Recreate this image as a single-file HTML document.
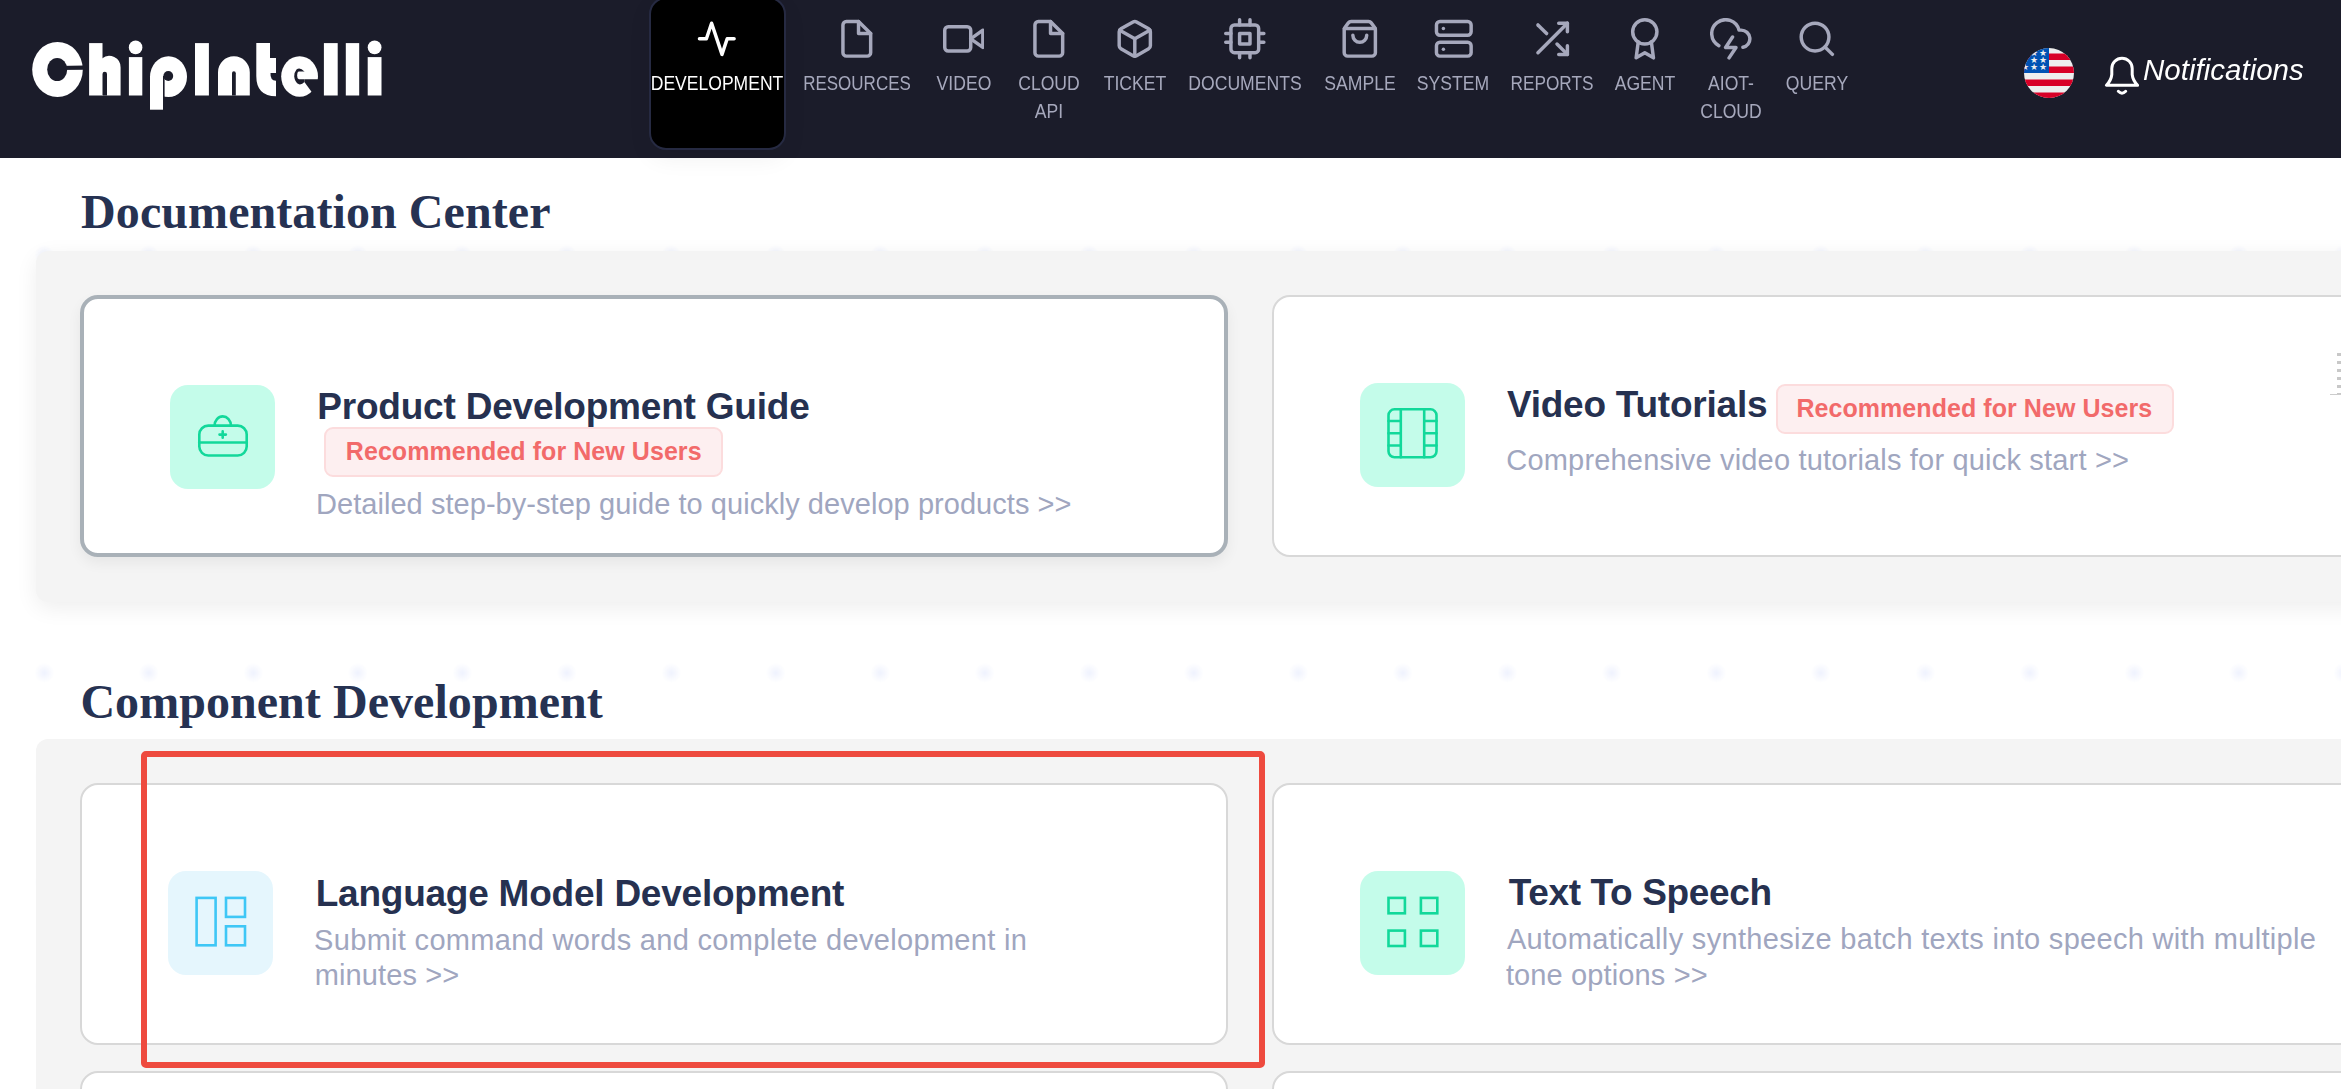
<!DOCTYPE html>
<html><head><meta charset="utf-8">
<style>
*{box-sizing:border-box;margin:0;padding:0}
html,body{width:2341px;height:1089px;overflow:hidden;background:#fff;font-family:"Liberation Sans",sans-serif}
.abs{position:absolute}
#hdr{position:absolute;left:0;top:0;width:2341px;height:157.5px;background:#1b1c2a}
.active{position:absolute;left:649.2px;top:-3px;width:136.4px;height:153px;background:#000;border:2px solid #262a42;border-radius:17px;box-shadow:0 8px 24px rgba(0,0,0,0.06)}
.ni{position:absolute;top:18px;width:41.6px;height:41.6px}
.ni svg{width:41.6px;height:41.6px;display:block;fill:none;stroke:#a6a8bc;stroke-width:2;stroke-linecap:round;stroke-linejoin:round}
.nl{position:absolute;top:68.5px;font-size:20px;line-height:28.7px;color:#a6a8bc;white-space:nowrap;text-align:center;transform-origin:50% 0}
.hd{position:absolute;left:81px;font-family:"Liberation Serif",serif;font-weight:bold;font-size:48px;line-height:48px;color:#263252;white-space:nowrap}
.panel{position:absolute;left:36px;width:2400px;background:#f4f4f4;border-radius:12px}
.card{position:absolute;width:1148px;height:262px;background:#fff;border:2px solid #d8d8d8;border-radius:18px}
.ib{position:absolute;width:105px;height:104px;border-radius:18px;background:#c4fcea}
.ib svg{position:absolute;fill:none;stroke-linecap:round;stroke-linejoin:round}
.tt{position:absolute;font-weight:bold;font-size:37px;line-height:37px;color:#263150;white-space:nowrap}
.ds{position:absolute;font-size:29px;line-height:29px;color:#a0a6bf;white-space:nowrap}
.bdg{position:absolute;height:49.5px;background:#fdeff0;border:2px solid #fcdcdd;border-radius:9px}
.bt{position:absolute;font-weight:bold;font-size:25px;line-height:25px;color:#f26a6a;white-space:nowrap}
</style></head><body>
<!-- dotted background -->
<div class="abs" style="left:0;top:157px;width:2341px;height:932px;background-image:radial-gradient(circle at 52.25px 52.25px, rgba(95,125,240,0.10) 0, rgba(95,125,240,0.06) 4px, rgba(95,125,240,0) 10px);background-size:104.5px 104.5px;background-position:-7.95px 45.65px"></div>

<div id="hdr">
  <svg class="abs" style="left:0;top:0" width="400" height="157" viewBox="0 0 400 157">
    <defs>
      <mask id="lm" maskUnits="userSpaceOnUse" x="0" y="0" width="400" height="157">
        <rect x="0" y="0" width="400" height="157" fill="#000"/>
        <g fill="#fff">
          <ellipse cx="57.5" cy="69.5" rx="25.3" ry="27.6"/>
          <rect x="89.1" y="43.1" width="13.4" height="52.4"/>
          <path d="M102 95.5 V58.4 A11.4 11.4 0 0 1 120.6 67.5 V95.5 Z"/>
          <circle cx="135.6" cy="47.4" r="6.8"/>
          <rect x="128.9" y="57.1" width="13.4" height="38.4"/>
          <ellipse cx="168.5" cy="76.7" rx="18.5" ry="20.4"/>
          <rect x="150" y="76" width="13" height="33.7"/>
          <rect x="195" y="43.1" width="13.9" height="52.4"/>
          <path d="M218 95.5 V72.2 A15.9 15.9 0 0 1 249.8 72.2 V95.5 Z"/>
          <path d="M256.3 43.1 H270 V58.1 H276 V73.1 H270.5 Q270 80.7 276 80.7 V96.3 Q256.3 96.3 256.3 76 Z"/>
          <ellipse cx="299.6" cy="76.5" rx="18.4" ry="20.2"/>
          <rect x="323.9" y="43.1" width="13.8" height="52.4"/>
          <rect x="345.8" y="43.1" width="13.4" height="52.4"/>
          <circle cx="374.6" cy="47.4" r="6.9"/>
          <rect x="367.7" y="57.1" width="13.8" height="38.4"/>
        </g>
        <g fill="#000">
          <ellipse cx="57.2" cy="69.5" rx="10" ry="11.5"/>
          <path d="M57 66.1 L85 65.6 L85 69.8 L57 69.9 Z"/>
          <path d="M102.5 95.5 V74 A2.25 2.25 0 0 1 107 74 V95.5 Z"/>
          <circle cx="168.3" cy="76" r="4.9"/>
          <rect x="163" y="76" width="1.6" height="21"/>
          <path d="M232 95.5 V73.2 A1.9 1.9 0 0 1 235.8 73.2 V95.5 Z"/>
          <path d="M304.4 71.5 Q300 66.8 296.5 69.5 Q293.8 73 294.2 76.5 Q294.8 82.5 299 84.3 Q302 84.8 304.4 82.1 Z"/>
        </g>
        <path fill="#fff" d="M299 71.5 H310 V79.2 H299 Q297.2 79.2 297.2 75.35 Q297.2 71.5 299 71.5 Z"/>
        <path fill="#000" d="M304.4 79.2 L319.6 79.2 L319.6 102 L319 102 L304.4 82.1 Z"/>
      </mask>
    </defs>
    <rect x="0" y="0" width="400" height="157" fill="#fff" mask="url(#lm)"/>
  </svg>

  <div class="active"></div>

  <!-- nav icons -->
  <div class="ni" style="left:696.1px"><svg viewBox="0 0 24 24" style="stroke:#fff"><polyline points="22 12 18 12 15 21 9 3 6 12 2 12"/></svg></div>
  <div class="ni" style="left:836.1px"><svg viewBox="0 0 24 24"><path d="M13 2H6a2 2 0 0 0-2 2v16a2 2 0 0 0 2 2h12a2 2 0 0 0 2-2V9z"/><polyline points="13 2 13 9 20 9"/></svg></div>
  <div class="ni" style="left:942.7px"><svg viewBox="0 0 24 24"><polygon points="23 7 16 12 23 17 23 7"/><rect x="1" y="5" width="15" height="14" rx="2" ry="2"/></svg></div>
  <div class="ni" style="left:1028.4px"><svg viewBox="0 0 24 24"><path d="M13 2H6a2 2 0 0 0-2 2v16a2 2 0 0 0 2 2h12a2 2 0 0 0 2-2V9z"/><polyline points="13 2 13 9 20 9"/></svg></div>
  <div class="ni" style="left:1114.2px"><svg viewBox="0 0 24 24"><path d="M21 16V8a2 2 0 0 0-1-1.73l-7-4a2 2 0 0 0-2 0l-7 4A2 2 0 0 0 3 8v8a2 2 0 0 0 1 1.73l7 4a2 2 0 0 0 2 0l7-4A2 2 0 0 0 21 16z"/><path d="m3.3 7 8.7 5 8.7-5"/><path d="M12 22V12"/></svg></div>
  <div class="ni" style="left:1224.2px"><svg viewBox="0 0 24 24"><rect x="4" y="4" width="16" height="16" rx="2"/><rect x="9" y="9" width="6" height="6"/><path d="M9 1v3M15 1v3M9 20v3M15 20v3M20 9h3M20 14h3M1 9h3M1 14h3"/></svg></div>
  <div class="ni" style="left:1338.9px"><svg viewBox="0 0 24 24"><path d="M3.4 5.467a2 2 0 0 0-.4 1.2V20a2 2 0 0 0 2 2h14a2 2 0 0 0 2-2V6.667a2 2 0 0 0-.4-1.2l-2-2.667A2 2 0 0 0 17 2H7a2 2 0 0 0-1.6.8z"/><path d="M3.103 6.034h17.794"/><path d="M16 10a4 4 0 0 1-8 0"/></svg></div>
  <div class="ni" style="left:1432.5px"><svg viewBox="0 0 24 24"><rect x="2" y="2" width="20" height="8" rx="2" ry="2"/><rect x="2" y="14" width="20" height="8" rx="2" ry="2"/><line x1="6" y1="6" x2="6.01" y2="6"/><line x1="6" y1="18" x2="6.01" y2="18"/></svg></div>
  <div class="ni" style="left:1530.7px"><svg viewBox="0 0 24 24"><polyline points="16 3 21 3 21 8"/><line x1="4" y1="20" x2="21" y2="3"/><polyline points="21 16 21 21 16 21"/><line x1="15" y1="15" x2="21" y2="21"/><line x1="4" y1="4" x2="9" y2="9"/></svg></div>
  <div class="ni" style="left:1623.6px"><svg viewBox="0 0 24 24"><circle cx="12" cy="8" r="7"/><polyline points="8.21 13.89 7 23 12 20 17 23 15.79 13.88"/></svg></div>
  <div class="ni" style="left:1710.2px"><svg viewBox="0 0 24 24"><path d="M19 16.9A5 5 0 0 0 18 7h-1.26a8 8 0 1 0-11.62 9"/><polyline points="13 11 9 17 15 17 11 23"/></svg></div>
  <div class="ni" style="left:1796px"><svg viewBox="0 0 24 24"><circle cx="11" cy="11" r="8"/><path d="m21 21-4.3-4.3"/></svg></div>

  <!-- nav labels (centered at x) -->
  <div class="nl" style="left:616.6px;width:200px;color:#fff;transform:scaleX(0.877)">DEVELOPMENT</div>
  <div class="nl" style="left:757.2px;width:200px;transform:scaleX(0.85)">RESOURCES</div>
  <div class="nl" style="left:863.5px;width:200px;transform:scaleX(0.88)">VIDEO</div>
  <div class="nl" style="left:949.2px;width:200px;transform:scaleX(0.88)">CLOUD<br>API</div>
  <div class="nl" style="left:1035px;width:200px;transform:scaleX(0.88)">TICKET</div>
  <div class="nl" style="left:1145px;width:200px;transform:scaleX(0.88)">DOCUMENTS</div>
  <div class="nl" style="left:1259.7px;width:200px;transform:scaleX(0.88)">SAMPLE</div>
  <div class="nl" style="left:1353.3px;width:200px;transform:scaleX(0.88)">SYSTEM</div>
  <div class="nl" style="left:1451.5px;width:200px;transform:scaleX(0.86)">REPORTS</div>
  <div class="nl" style="left:1545.3px;width:200px;transform:scaleX(0.88)">AGENT</div>
  <div class="nl" style="left:1631px;width:200px;transform:scaleX(0.88)">AIOT-<br>CLOUD</div>
  <div class="nl" style="left:1716.8px;width:200px;transform:scaleX(0.88)">QUERY</div>

  <!-- flag -->
  <svg class="abs" style="left:2024px;top:47.5px" width="50" height="50" viewBox="0 0 50 50">
    <defs><clipPath id="fc"><circle cx="25" cy="25" r="25"/></clipPath></defs>
    <g clip-path="url(#fc)">
      <rect width="50" height="50" fill="#eeeeee"/>
      <rect y="5.5" width="50" height="6.5" fill="#d80027"/>
      <rect y="18.5" width="50" height="6.5" fill="#d80027"/>
      <rect y="31.5" width="50" height="6.5" fill="#d80027"/>
      <rect y="44.5" width="50" height="6.5" fill="#d80027"/>
      <rect x="0" y="0" width="25" height="25" fill="#0052b4"/>
      <g fill="#eee" font-size="8.5" font-family="Liberation Sans"><text x="15.1" y="7.7">★</text><text x="6.1" y="7.7">★</text><text x="6.1" y="15">★</text><text x="15.1" y="15">★</text><text x="-2.9" y="22.2">★</text><text x="6.1" y="22.2">★</text><text x="15.1" y="22.2">★</text></g>
    </g>
  </svg>
  <!-- bell -->
  <svg class="abs" style="left:2102px;top:55px" width="40" height="42" viewBox="0 0 40 42">
    <path d="M4.4 30.2 H35.6 Q30.8 25.5 30.2 19.5 V13.5 A10.2 10.2 0 0 0 9.8 13.5 V19.5 Q9.2 25.5 4.4 30.2 Z" fill="none" stroke="#fff" stroke-width="3" stroke-linejoin="round"/>
    <path d="M16.3 36.3 Q20 40 23.7 36.3" fill="none" stroke="#fff" stroke-width="3" stroke-linecap="round"/>
  </svg>
  <div class="abs" style="left:2143px;top:56.4px;font-style:italic;font-size:29px;line-height:29px;color:#fff;white-space:nowrap;transform:scaleX(1.018);transform-origin:0 0">Notifications</div>
</div>

<!-- Section 1 -->
<div id="t_doc" class="hd" style="top:187.90px;left:81.10px;letter-spacing:0.079px">Documentation Center</div>
<div class="panel" style="top:250.7px;height:351.5px;box-shadow:0 6px 22px rgba(0,0,0,0.07)"></div>

<div class="card" style="left:80px;top:295px;border:4px solid #a9b1b8;box-shadow:0 6px 14px rgba(0,0,0,0.06)"></div>
<div class="ib" style="left:170px;top:385px"></div>
<svg class="abs" style="left:170px;top:385px" width="105" height="104" viewBox="0 0 105 104">
  <g fill="none" stroke="#12d89a" stroke-width="2.6" stroke-linecap="round" stroke-linejoin="round">
    <rect x="29.3" y="40.6" width="47.4" height="29.9" rx="9"/>
    <path d="M29.3 57.5 H76.7"/>
    <path d="M44.6 40.6 A8.1 9.2 0 0 1 60.9 40.6"/>
    <path d="M52.7 46.4 V52.8 M49.5 49.6 H55.9"/>
  </g>
</svg>
<div id="t_pdg" class="tt" style="left:317.30px;top:388.00px;letter-spacing:-0.212px">Product Development Guide</div>
<div class="bdg" style="left:324.3px;top:427.3px;width:398.6px"></div>
<div id="b1" class="bt" style="left:345.80px;top:438.60px;letter-spacing:0.062px">Recommended for New Users</div>
<div id="d1" class="ds" style="left:316.00px;top:490.00px;letter-spacing:0.047px">Detailed step-by-step guide to quickly develop products &gt;&gt;</div>

<div class="card" style="left:1272px;top:295px"></div>
<div class="ib" style="left:1360px;top:383px"></div>
<svg class="abs" style="left:1360px;top:383px" width="105" height="104" viewBox="0 0 105 104">
  <g fill="none" stroke="#12d89a" stroke-width="2.6" stroke-linecap="round" stroke-linejoin="round">
    <rect x="28.5" y="26.3" width="48" height="48" rx="6"/>
    <path d="M40.8 26.3 V74.3 M64.2 26.3 V74.3 M28.5 38 H40.8 M28.5 50.3 H40.8 M28.5 62.5 H40.8 M64.2 38 H76.5 M64.2 50.3 H76.5 M64.2 62.5 H76.5"/>
  </g>
</svg>
<div id="t_vt" class="tt" style="left:1506.90px;top:386.4px;letter-spacing:-0.229px">Video Tutorials</div>
<div class="bdg" style="left:1776.2px;top:384px;width:397.7px"></div>
<div id="b2" class="bt" style="left:1796.40px;top:396.10px;letter-spacing:0.062px">Recommended for New Users</div>
<div id="d2" class="ds" style="left:1506.30px;top:446.30px;letter-spacing:0.181px">Comprehensive video tutorials for quick start &gt;&gt;</div>

<!-- Section 2 -->
<div id="t_comp" class="hd" style="top:678px;left:80.40px;letter-spacing:0.055px">Component Development</div>
<div class="panel" style="top:738.7px;height:400px"></div>

<div class="card" style="left:80px;top:783px"></div>
<div class="ib" style="left:168.3px;top:870.8px;background:#e5f6fd"></div>
<svg class="abs" style="left:168.3px;top:870.8px" width="105" height="104" viewBox="0 0 105 104">
  <g fill="none" stroke="#3ec7f6" stroke-width="2.6" stroke-linejoin="miter">
    <rect x="28.6" y="26.9" width="19" height="47.4"/>
    <rect x="58" y="26.9" width="19" height="19"/>
    <rect x="58" y="55.3" width="19" height="19"/>
  </g>
</svg>
<div id="t_lmd" class="tt" style="left:315.70px;top:874.60px;letter-spacing:-0.232px">Language Model Development</div>
<div id="d3a" class="ds" style="left:314.10px;top:925.80px;letter-spacing:0.315px">Submit command words and complete development in</div>
<div id="d3b" class="ds" style="left:314.70px;top:961.40px;letter-spacing:0.122px">minutes &gt;&gt;</div>

<div class="card" style="left:1272px;top:783px"></div>
<div class="ib" style="left:1360px;top:870.8px"></div>
<svg class="abs" style="left:1360px;top:870.8px" width="105" height="104" viewBox="0 0 105 104">
  <g fill="none" stroke="#12d89a" stroke-width="2.6" stroke-linejoin="miter">
    <rect x="28.5" y="26.9" width="16.4" height="15.4"/>
    <rect x="60.9" y="26.9" width="16.4" height="15.4"/>
    <rect x="28.5" y="59.6" width="16.4" height="15.4"/>
    <rect x="60.9" y="59.6" width="16.4" height="15.4"/>
  </g>
</svg>
<div id="t_tts" class="tt" style="left:1508.70px;top:874.4px;letter-spacing:-0.354px">Text To Speech</div>
<div id="d4a" class="ds" style="left:1506.90px;top:925.40px;letter-spacing:0.315px">Automatically synthesize batch texts into speech with multiple</div>
<div id="d4b" class="ds" style="left:1505.90px;top:961.40px;letter-spacing:0.129px">tone options &gt;&gt;</div>

<div class="card" style="left:80px;top:1070.7px"></div>
<div class="card" style="left:1272px;top:1070.7px"></div>

<!-- red highlight -->
<div class="abs" style="left:141.2px;top:751.1px;width:1123.4px;height:316.8px;border:6.3px solid #ee4a3e;border-radius:5px"></div>

<!-- right edge marks -->
<div class="abs" style="left:2337px;top:353px;width:4px;height:42px;background:repeating-linear-gradient(to bottom,#c8c8c8 0 3px,transparent 3px 8px)"></div>
<div class="abs" style="left:2330px;top:393.5px;width:11px;height:1.5px;background:#ccc"></div>
</body></html>
